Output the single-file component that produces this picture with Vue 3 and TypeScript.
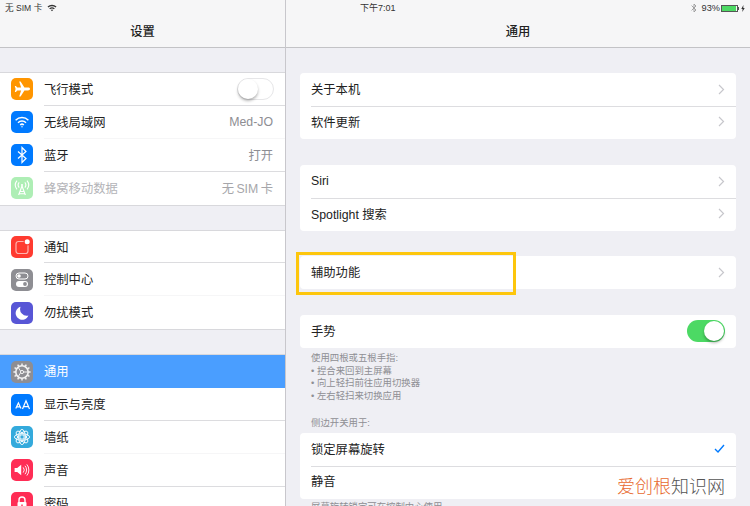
<script setup lang="ts">
interface Row { label: string; value?: string; icon: string; bg: string; dim?: boolean; selected?: boolean; toggle?: boolean; faint?: boolean }
const groups: Row[][] = [
  [
    { label: '飞行模式', icon: 'plane', bg: '#ff9500', toggle: true },
    { label: '无线局域网', value: 'Med-JO', icon: 'wifi', bg: '#007aff', faint: true },
    { label: '蓝牙', value: '打开', icon: 'bt', bg: '#007aff' },
    { label: '蜂窝移动数据', value: '无 SIM 卡', icon: 'cell', bg: '#aeeeb5', dim: true },
  ],
  [
    { label: '通知', icon: 'notif', bg: '#ff3b30' },
    { label: '控制中心', icon: 'control', bg: '#8e8e93', faint: true },
    { label: '勿扰模式', icon: 'moon', bg: '#5856d6' },
  ],
  [
    { label: '通用', icon: 'gear', bg: '#8e8e93', selected: true },
    { label: '显示与亮度', icon: 'aa', bg: '#007aff' },
    { label: '墙纸', icon: 'flower', bg: '#34aadc', faint: true },
    { label: '声音', icon: 'sound', bg: '#ff2d55' },
    { label: '密码', icon: 'lock', bg: '#ff2d55' },
  ],
]
const petals = [0, 45, 90, 135]
const teeth = [0, 30, 60, 90, 120, 150]
</script>

<template>
  <div class="ipad">
    <div class="status">
      <div class="st-left">
        <span>无 SIM 卡</span>
        <svg width="10" height="8" viewBox="0 0 10 8"><path d="M.5 2.6a6.6 6.6 0 0 1 9 0L8.6 3.6a5.3 5.3 0 0 0-7.2 0zM2.2 4.4a4.2 4.2 0 0 1 5.6 0L6.9 5.3a3 3 0 0 0-3.8 0zM3.9 6a1.7 1.7 0 0 1 2.2 0L5 7.3z" fill="#333"/></svg>
      </div>
      <div class="st-time">下午7:01</div>
      <div class="st-right">
        <svg width="6" height="10" viewBox="0 0 6 10"><path d="M.6 2.6 5 7 3 9V1l2 2L.6 7.4" fill="none" stroke="#999" stroke-width=".9"/></svg>
        <span class="pct">93%</span>
        <span class="batt"><span class="batt-fill"></span></span>
        <span class="batt-tip"></span>
        <svg width="4" height="7" viewBox="0 0 4 7"><path d="M2.4 0 .3 3.9h1.3L1.3 7l2.4-4H2.3z" fill="#333"/></svg>
      </div>
    </div>

    <aside class="side">
      <header class="nav">设置</header>
      <div class="side-body">
        <section v-for="(g, gi) in groups" :key="gi" class="side-group">
          <div v-for="r in g" :key="r.label" class="s-row" :class="{ sel: r.selected, dim: r.dim, faint: r.faint }">
            <span class="ico" :style="{ background: r.bg }">
              <svg width="22" height="22" viewBox="0 0 22 22">
                <path v-if="r.icon === 'plane'" d="M19 11c0-.9-1-1.4-2-1.4h-3.6L9.6 3.6H8.2l1.9 6H6.3L4.9 7.9H3.8l.8 3.1-.8 3.1h1.1l1.4-1.7h3.8l-1.9 6h1.4l3.8-6H17c1 0 2-.5 2-1.4z" fill="#fff"/>
                <g v-else-if="r.icon === 'wifi'" fill="none" stroke="#fff" stroke-width="1.5">
                  <path d="M4.6 9.2a9.2 9.2 0 0 1 12.8 0"/><path d="M7 11.7a5.8 5.8 0 0 1 8 0"/><path d="M9.2 14a2.6 2.6 0 0 1 3.6 0"/>
                  <circle cx="11" cy="15.8" r=".7" fill="#fff" stroke="none"/>
                </g>
                <path v-else-if="r.icon === 'bt'" d="M7 7.5 15 14.5 11 18.5V3.5l4 4L7 14.5" fill="none" stroke="#fff" stroke-width="1.2"/>
                <g v-else-if="r.icon === 'cell'" fill="none" stroke="#fff" stroke-width="1.1">
                  <path d="M11 9 7.6 18M11 9l3.4 9M9 14.5h4M8.2 16.8h5.6"/>
                  <circle cx="11" cy="8" r="1.1" fill="#fff" stroke="none"/>
                  <path d="M8.2 5.4a4 4 0 0 0 0 5.2M13.8 5.4a4 4 0 0 1 0 5.2M6 3.6a7 7 0 0 0 0 8.8M16 3.6a7 7 0 0 1 0 8.8"/>
                </g>
                <g v-else-if="r.icon === 'notif'">
                  <rect x="5" y="5.5" width="12" height="12" rx="2.5" fill="none" stroke="#ffb3ae" stroke-width="1.2"/>
                  <circle cx="16.2" cy="5.8" r="3.6" fill="#ff3b30"/>
                  <circle cx="16.2" cy="5.8" r="2.5" fill="#fff"/>
                </g>
                <g v-else-if="r.icon === 'control'">
                  <rect x="5" y="4" width="12" height="6" rx="3" fill="none" stroke="#fff" stroke-width="1"/>
                  <circle cx="8" cy="7" r="1.8" fill="#fff"/>
                  <rect x="5" y="12" width="12" height="6" rx="3" fill="#fff"/>
                  <circle cx="14" cy="15" r="1.9" fill="#8e8e93"/>
                </g>
                <path v-else-if="r.icon === 'moon'" d="M9.6 4.8a6.6 6.6 0 1 0 7.8 8.8A6.6 6.6 0 0 1 9.6 4.8z" fill="#fff"/>
                <g v-else-if="r.icon === 'gear'" fill="none" stroke="#f2f2f2">
                  <circle cx="11" cy="11" r="6.2" stroke-width="1.6"/>
                  <path v-for="t in teeth" :key="t" d="M11 2.4v17.2" stroke-width="1.5" stroke-dasharray="2.4 12.4" :transform="`rotate(${t} 11 11)`"/>
                  <circle cx="11" cy="11" r="1.6" stroke-width="1"/>
                  <path d="M9.6 10.2 7.2 6.4M9.6 11.8 7.2 15.6M12.6 11H17" stroke-width="1"/>
                </g>
                <g v-else-if="r.icon === 'aa'" fill="none" stroke="#fff" stroke-width="1.2">
                  <path d="M4.8 14.5 7.4 9l2.6 5.5M5.8 12.8h3.2"/>
                  <path d="M11.5 15 15 6.8l3.5 8.2M12.9 12.6h4.2"/>
                </g>
                <g v-else-if="r.icon === 'flower'" fill="none" stroke="#fff" stroke-width=".9">
                  <ellipse v-for="p in petals" :key="p" cx="11" cy="11" rx="3.3" ry="7.6" :transform="`rotate(${p} 11 11)`"/>
                  <circle cx="11" cy="11" r="2.2"/>
                </g>
                <g v-else-if="r.icon === 'sound'">
                  <path d="M3.6 9h2.6l4-3.2v10.4l-4-3.2H3.6z" fill="#fff"/>
                  <path d="M12.2 8.4a4 4 0 0 1 0 5.2M14 6.8a6.4 6.4 0 0 1 0 8.4M15.8 5.4a8.6 8.6 0 0 1 0 11.2" fill="none" stroke="#fff" stroke-width=".9"/>
                </g>
                <g v-else-if="r.icon === 'lock'">
                  <path d="M8 10.5V8a3 3 0 0 1 6 0v2.5" fill="none" stroke="#fff" stroke-width="1.4"/>
                  <rect x="6.5" y="10" width="9" height="8" rx="1" fill="#fff"/>
                  <rect x="10.3" y="12.5" width="1.4" height="3" fill="#ff2d55"/>
                </g>
              </svg>
            </span>
            <div class="s-main">
              <span class="s-label">{{ r.label }}</span>
              <span v-if="r.value" class="s-val">{{ r.value }}</span>
              <span v-if="r.toggle" class="tog off"><span class="knob"></span></span>
            </div>
          </div>
        </section>
      </div>
    </aside>

    <main class="detail">
      <header class="nav">通用</header>
      <div class="d-body">
        <section class="card">
          <div class="d-row"><span>关于本机</span><svg class="chev" width="7" height="11" viewBox="0 0 7 11"><path d="m1 1 4.5 4.5L1 10" fill="none" stroke="#c7c7cc" stroke-width="1.2"/></svg></div>
          <div class="d-row"><span>软件更新</span><svg class="chev" width="7" height="11" viewBox="0 0 7 11"><path d="m1 1 4.5 4.5L1 10" fill="none" stroke="#c7c7cc" stroke-width="1.2"/></svg></div>
        </section>
        <section class="card mt-gap">
          <div class="d-row"><span>Siri</span><svg class="chev" width="7" height="11" viewBox="0 0 7 11"><path d="m1 1 4.5 4.5L1 10" fill="none" stroke="#c7c7cc" stroke-width="1.2"/></svg></div>
          <div class="d-row"><span>Spotlight 搜索</span><svg class="chev" width="7" height="11" viewBox="0 0 7 11"><path d="m1 1 4.5 4.5L1 10" fill="none" stroke="#c7c7cc" stroke-width="1.2"/></svg></div>
        </section>
        <section class="card mt-gap2 highlight-host">
          <div class="d-row"><span>辅助功能</span><svg class="chev" width="7" height="11" viewBox="0 0 7 11"><path d="m1 1 4.5 4.5L1 10" fill="none" stroke="#c7c7cc" stroke-width="1.2"/></svg></div>
          <div class="hl"></div>
        </section>
        <section class="card mt-gap3">
          <div class="d-row"><span>手势</span><span class="tog on"><span class="knob"></span></span></div>
        </section>
        <div class="note">
          <div>使用四根或五根手指:</div>
          <div>• 捏合来回到主屏幕</div>
          <div>• 向上轻扫前往应用切换器</div>
          <div>• 左右轻扫来切换应用</div>
        </div>
        <div class="note cap">侧边开关用于:</div>
        <section class="card">
          <div class="d-row"><span>锁定屏幕旋转</span><svg width="11" height="9" viewBox="0 0 11 9"><path d="m1 5 3 3 6-7" fill="none" stroke="#007aff" stroke-width="1.4"/></svg></div>
          <div class="d-row"><span>静音</span></div>
        </section>
        <div class="note tail">屏幕旋转锁定可在控制中心使用。</div>
      </div>
      <div class="mark"><span class="m-o">爱创根</span><span class="m-g">知识网</span></div>
    </main>
  </div>
</template>

<style>
html, body { margin: 0; height: 506px; overflow: hidden; background: #efeff4; }
</style>

<style scoped>
.ipad {
  position: relative;
  width: 750px;
  height: 506px;
  overflow: hidden;
  display: flex;
  background: #efeff4;
  color: #222;
  font-family: "Liberation Sans", "Noto Sans CJK SC", sans-serif;
  font-size: 12.3px;
}
.status {
  position: absolute;
  inset: 0 0 auto 0;
  height: 14px;
  font-size: 8.6px;
  line-height: 14px;
  color: #333;
  z-index: 2;
}
.st-left { position: absolute; left: 5px; top: 1px; display: flex; align-items: center; gap: 5px; }
.st-time { position: absolute; left: 360px; top: 1px; font-size: 9px; }
.st-right { position: absolute; right: 5px; top: 1px; display: flex; align-items: center; }
.pct { margin: 0 1px 0 5px; font-size: 9.2px; }
.batt { width: 15px; height: 5px; border: 1px solid #555; padding: 0; display: block; box-sizing: content-box; }
.batt-fill { display: block; width: 14px; height: 5px; background: #4cd964; }
.batt-tip { width: 1px; height: 3px; background: #555; margin-right: 2px; }

.side { width: 285px; flex: none; border-right: 1px solid #c8c7cc; display: flex; flex-direction: column; }
.detail { flex: 1; display: flex; flex-direction: column; position: relative; min-width: 0; }
.nav {
  height: 47px;
  flex: none;
  border-bottom: 1px solid #c3c3c6;
  background: #f6f6f7;
  text-align: center;
  line-height: 64px;
  font-weight: 500;
  color: #222;
}
.side-body { padding-top: 24px; display: flex; flex-direction: column; gap: 24px; }
.side-group { background: #fff; border-top: 1px solid #d8d8dc; border-bottom: 1px solid #d8d8dc; }
.s-row { height: 32.9px; display: flex; align-items: center; }
.ico { width: 22px; height: 22px; margin: 0 11px; border-radius: 5px; flex: none; display: block; }
.ico svg { display: block; }
.s-main {
  flex: 1; height: 100%; display: flex; align-items: center; justify-content: space-between;
  padding-right: 12px; box-sizing: border-box; border-bottom: 1px solid #dcdcdf; min-width: 0;
}
.s-row:last-child .s-main { border-bottom: 0; padding-bottom: 1px; }
.faint .s-main { border-bottom-color: #f6f6f7; }
.s-val { color: #8e8e93; word-spacing: -1px; }
.dim .s-label { color: #b4b4b8; }
.dim .s-val { color: #a6a6aa; }
.sel { background: #4a9eff; }
.sel .s-main { border-bottom: 0; padding-bottom: 1px; }
.sel .s-label { color: #fff; }

.d-body { padding: 25px 14px 0; }
.card { background: #fff; border-radius: 4px; }
.mt-gap { margin-top: 26px; }
.mt-gap2 { margin-top: 25px; }
.mt-gap3 { margin-top: 26px; }
.d-row {
  height: 33px; display: flex; align-items: center; justify-content: space-between;
  margin-left: 11px; padding: 0 11px 1px 0; box-sizing: border-box; position: relative;
}
.d-row + .d-row { border-top: 1px solid #dddde0; padding-bottom: 3px; }
.highlight-host { position: relative; }
.hl {
  position: absolute;
  left: -4px; top: -4px;
  width: 214px; height: 37px;
  border: 3.5px solid #fdc60c;
}
.note { font-size: 9.4px; line-height: 12.7px; color: #8e8e93; padding: 4px 0 0 11px; }
.cap { padding-top: 14px; padding-bottom: 3px; }
.tail { padding-top: 2px; }
.tog { width: 38px; height: 22px; border-radius: 11px; position: relative; display: block; box-sizing: border-box; }
.tog.off { width: 37px; background: #fff; border: 1px solid #e6e6e8; margin-right: -1px; }
.tog.on { background: #4cd964; }
.knob { position: absolute; width: 20px; height: 20px; border-radius: 50%; background: #fff; box-shadow: 0 2px 3px rgba(0,0,0,.3); top: 1px; }
.off .knob { left: 0; top: 0; }
.on .knob { right: 1px; }
.mark { position: absolute; left: 331px; top: 474px; font-size: 18px; line-height: 26px; white-space: nowrap; font-weight: 300; }
.m-o { color: #e8692d; }
.m-g { color: #555; }
</style>
